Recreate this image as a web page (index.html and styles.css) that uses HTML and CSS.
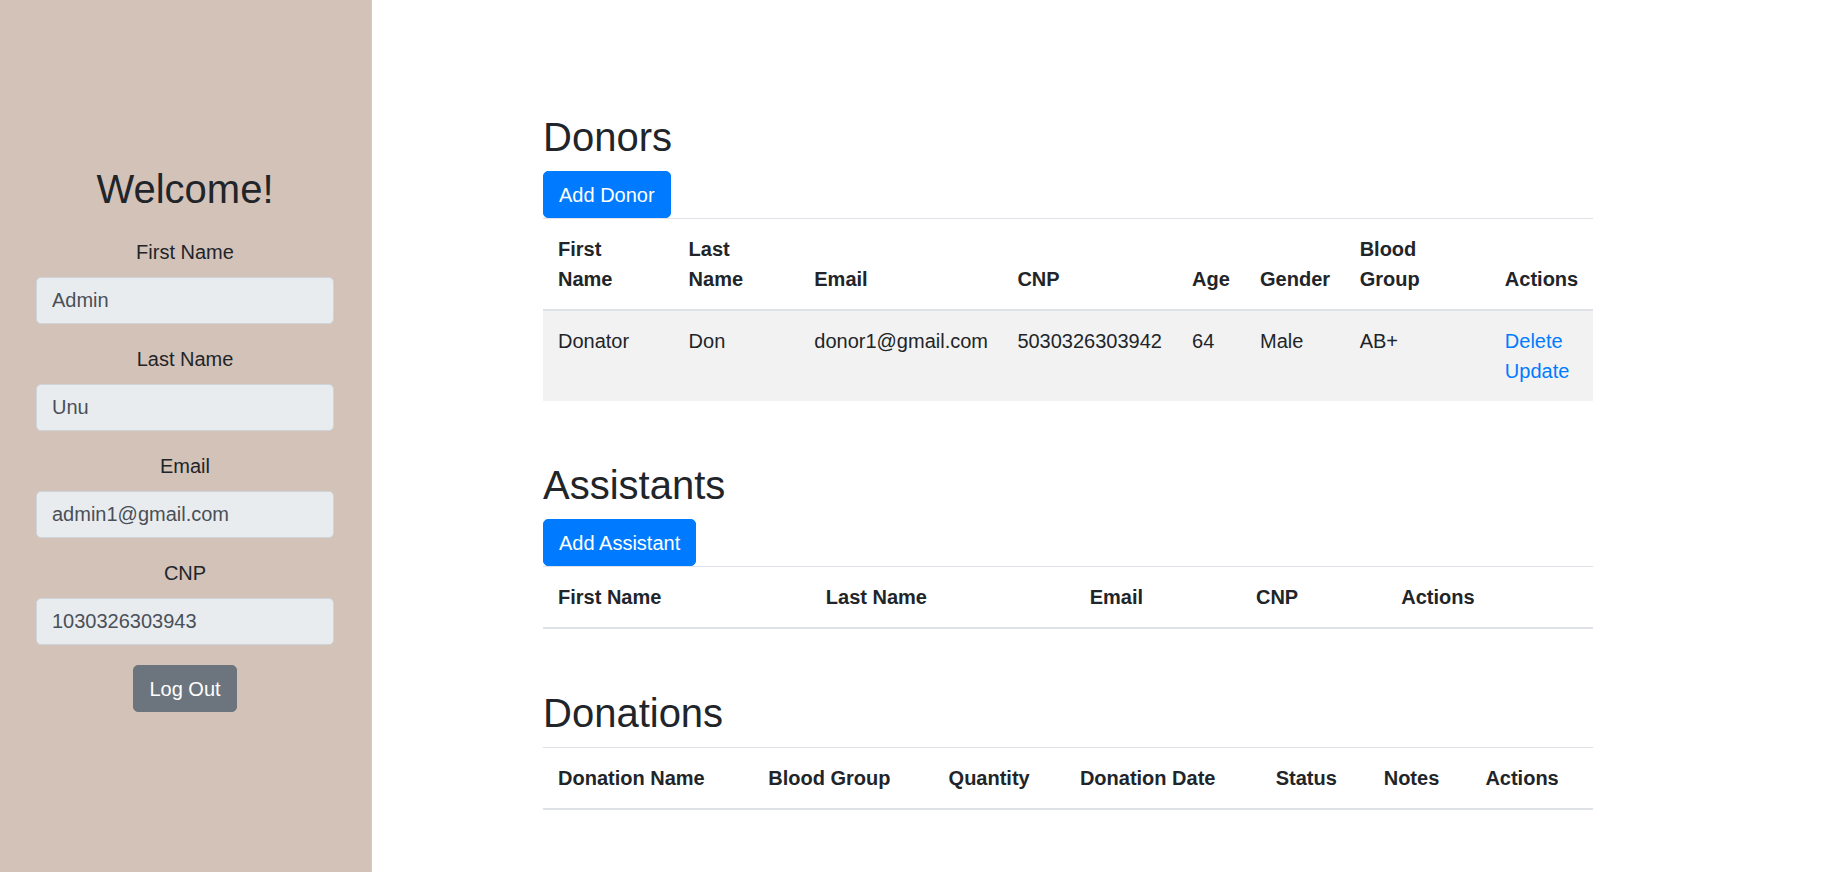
FILE: index.html
```html
<!DOCTYPE html>
<html lang="en">
<head>
<meta charset="utf-8">
<title>Admin</title>
<link rel="stylesheet" href="styles.css">
</head>
<body>
<div class="layout">
  <aside class="sidebar">
    <div class="profile">
      <h2 class="welcome">Welcome!</h2>
      <div class="field">
        <label class="field-label">First Name</label>
        <input class="field-input" type="text" value="Admin" readonly>
      </div>
      <div class="field">
        <label class="field-label">Last Name</label>
        <input class="field-input" type="text" value="Unu" readonly>
      </div>
      <div class="field">
        <label class="field-label">Email</label>
        <input class="field-input" type="text" value="admin1@gmail.com" readonly>
      </div>
      <div class="field">
        <label class="field-label">CNP</label>
        <input class="field-input" type="text" value="1030326303943" readonly>
      </div>
      <button class="btn btn-secondary" type="button">Log Out</button>
    </div>
  </aside>
  <main class="content">
    <section class="block">
      <h2 class="block-title">Donors</h2>
      <button class="btn btn-primary" type="button">Add Donor</button>
      <table class="data-table donors">
        <thead>
          <tr>
            <th>First<br>Name</th>
            <th>Last<br>Name</th>
            <th>Email</th>
            <th>CNP</th>
            <th>Age</th>
            <th>Gender</th>
            <th>Blood<br>Group</th>
            <th>Actions</th>
          </tr>
        </thead>
        <tbody>
          <tr class="striped">
            <td>Donator</td>
            <td>Don</td>
            <td>donor1@gmail.com</td>
            <td>5030326303942</td>
            <td>64</td>
            <td>Male</td>
            <td>AB+</td>
            <td><a class="action-link" href="#">Delete</a><a class="action-link" href="#">Update</a></td>
          </tr>
        </tbody>
      </table>
    </section>
    <section class="block">
      <h2 class="block-title">Assistants</h2>
      <button class="btn btn-primary" type="button">Add Assistant</button>
      <table class="data-table assistants">
        <thead>
          <tr>
            <th>First Name</th>
            <th>Last Name</th>
            <th>Email</th>
            <th>CNP</th>
            <th>Actions</th>
          </tr>
        </thead>
        <tbody></tbody>
      </table>
    </section>
    <section class="block">
      <h2 class="block-title">Donations</h2>
      <table class="data-table donations">
        <thead>
          <tr>
            <th>Donation Name</th>
            <th>Blood Group</th>
            <th>Quantity</th>
            <th>Donation Date</th>
            <th>Status</th>
            <th>Notes</th>
            <th>Actions</th>
          </tr>
        </thead>
        <tbody></tbody>
      </table>
    </section>
  </main>
</div>
</body>
</html>
```

FILE: styles.css
```css
* {
  box-sizing: border-box;
}

html, body {
  margin: 0;
  padding: 0;
  height: 100%;
}

body {
  font-family: "Liberation Sans", Arial, sans-serif;
  font-size: 20px;
  line-height: 30px;
  color: #212529;
  background: #ffffff;
  overflow: hidden;
}

.layout {
  display: flex;
  height: 872px;
}

/* Sidebar */
.sidebar {
  width: 372px;
  flex: 0 0 372px;
  height: 100%;
  background: #d3c2b8;
  border-right: 1px solid #cdcdcd;
  display: flex;
  flex-direction: column;
  justify-content: center;
  padding-top: 5px;
}

.profile {
  width: 298px;
  margin-left: 36px;
  display: flex;
  flex-direction: column;
  align-items: center;
}

.welcome {
  margin: 0 0 24px;
  font-size: 40px;
  line-height: 48px;
  font-weight: 500;
}

.field {
  width: 100%;
  display: flex;
  flex-direction: column;
  align-items: center;
  margin-bottom: 20px;
}

.field-label {
  display: block;
  margin-bottom: 10px;
  font-size: 20px;
  line-height: 30px;
}

.field-input {
  display: block;
  width: 100%;
  height: 47px;
  padding: 7.5px 15px;
  font-family: "Liberation Sans", Arial, sans-serif;
  font-size: 20px;
  line-height: 30px;
  color: #495057;
  background: #e9ecef;
  border: 1px solid #ced4da;
  border-radius: 5px;
  outline: none;
}

/* Buttons */
.btn {
  display: inline-block;
  font-family: "Liberation Sans", Arial, sans-serif;
  font-size: 20px;
  line-height: 30px;
  padding: 7.5px 15px;
  border: 1px solid transparent;
  border-radius: 5px;
  color: #ffffff;
  cursor: pointer;
}

.btn-primary {
  background: #007bff;
  border-color: #007bff;
}

.btn-secondary {
  background: #6c757d;
  border-color: #6c757d;
}

/* Main content */
.content {
  flex: 1;
  padding-top: 113px;
  padding-left: 171px;
}

.block {
  width: 1050px;
  margin-bottom: 60px;
}

.block-title {
  margin: 0 0 10px;
  font-size: 40px;
  line-height: 48px;
  font-weight: 500;
}

.data-table {
  width: 1050px;
  table-layout: fixed;
  border-collapse: collapse;
}

.data-table th,
.data-table td {
  padding: 15px;
  text-align: left;
  border-top: 1px solid #dee2e6;
}

.data-table th {
  vertical-align: bottom;
  font-weight: 700;
  white-space: nowrap;
  border-bottom: 2px solid #dee2e6;
}

.data-table td {
  vertical-align: top;
  white-space: nowrap;
}

.striped td {
  background: #f2f2f2;
}

.action-link {
  display: block;
  color: #007bff;
  text-decoration: none;
}

/* Donors columns */
.donors th:nth-child(1) { width: 130.6px; }
.donors th:nth-child(2) { width: 125.7px; }
.donors th:nth-child(3) { width: 203.1px; }
.donors th:nth-child(4) { width: 174.7px; }
.donors th:nth-child(5) { width: 68px; }
.donors th:nth-child(6) { width: 99.6px; }
.donors th:nth-child(7) { width: 145.2px; }
.donors th:nth-child(8) { width: 103.1px; }

/* Assistants columns */
.assistants th:nth-child(1) { width: 267.8px; }
.assistants th:nth-child(2) { width: 263.9px; }
.assistants th:nth-child(3) { width: 166.3px; }
.assistants th:nth-child(4) { width: 145.3px; }
.assistants th:nth-child(5) { width: 206.7px; }

/* Donations columns */
.donations th:nth-child(1) { width: 210.3px; }
.donations th:nth-child(2) { width: 180.3px; }
.donations th:nth-child(3) { width: 131.3px; }
.donations th:nth-child(4) { width: 195.8px; }
.donations th:nth-child(5) { width: 108px; }
.donations th:nth-child(6) { width: 101.7px; }
.donations th:nth-child(7) { width: 122.6px; }
```
